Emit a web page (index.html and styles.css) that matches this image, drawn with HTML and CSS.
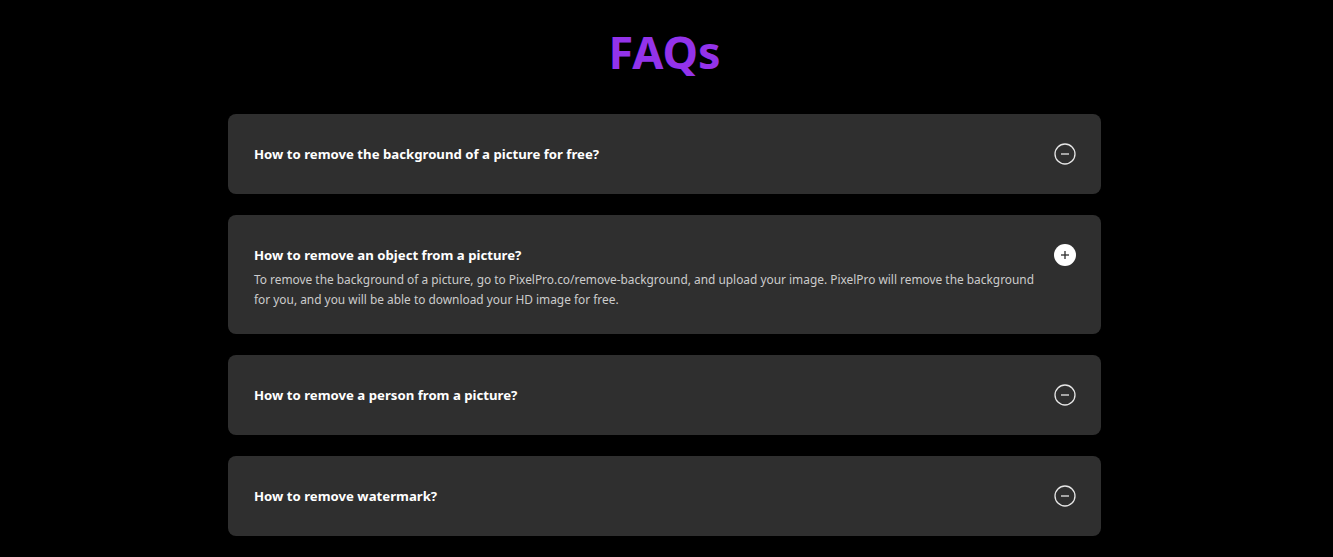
FILE: index.html
```html
<!DOCTYPE html>
<html lang="en">
<head>
<meta charset="utf-8">
<title>FAQs</title>
<link rel="stylesheet" href="styles.css">
</head>
<body>
<main class="faq">
  <h1 class="faq-title">FAQs</h1>
  <div class="faq-list">
    <div class="faq-item">
      <div class="faq-text">
        <h2 class="faq-q">How to remove the background of a picture for free?</h2>
      </div>
      <span class="faq-icon">
        <svg width="22" height="22" viewBox="0 0 22 22"><circle cx="11" cy="11" r="10" fill="none" stroke="#e6e6e6" stroke-width="1.3"/><line x1="7" y1="11" x2="15" y2="11" stroke="#e6e6e6" stroke-width="1.3"/></svg>
      </span>
    </div>
    <div class="faq-item open">
      <div class="faq-text">
        <h2 class="faq-q">How to remove an object from a picture?</h2>
        <p class="faq-a">To remove the background of a picture, go to PixelPro.co/remove-background, and upload your image. PixelPro will remove the background for you, and you will be able to download your HD image for free.</p>
      </div>
      <span class="faq-icon">
        <svg width="22" height="22" viewBox="0 0 22 22"><circle cx="11" cy="11" r="11" fill="#ffffff"/><line x1="7" y1="11" x2="15" y2="11" stroke="#2f2f2f" stroke-width="1.3"/><line x1="11" y1="7" x2="11" y2="15" stroke="#2f2f2f" stroke-width="1.3"/></svg>
      </span>
    </div>
    <div class="faq-item">
      <div class="faq-text">
        <h2 class="faq-q">How to remove a person from a picture?</h2>
      </div>
      <span class="faq-icon">
        <svg width="22" height="22" viewBox="0 0 22 22"><circle cx="11" cy="11" r="10" fill="none" stroke="#e6e6e6" stroke-width="1.3"/><line x1="7" y1="11" x2="15" y2="11" stroke="#e6e6e6" stroke-width="1.3"/></svg>
      </span>
    </div>
    <div class="faq-item">
      <div class="faq-text">
        <h2 class="faq-q">How to remove watermark?</h2>
      </div>
      <span class="faq-icon">
        <svg width="22" height="22" viewBox="0 0 22 22"><circle cx="11" cy="11" r="10" fill="none" stroke="#e6e6e6" stroke-width="1.3"/><line x1="7" y1="11" x2="15" y2="11" stroke="#e6e6e6" stroke-width="1.3"/></svg>
      </span>
    </div>
  </div>
</main>
</body>
</html>
```

FILE: styles.css
```css
html, body {
  margin: 0;
  padding: 0;
  background: #000000;
}

body {
  font-family: "Noto Sans", "Open Sans", sans-serif;
  color: #ffffff;
  padding-right: 4px;
}

.faq {
  width: 873px;
  margin: 0 auto;
  display: flex;
  flex-direction: column;
}

.faq-title {
  margin: 26px 0 0 0;
  height: 88px;
  text-align: center;
  font-size: 45px;
  line-height: 52px;
  font-weight: 700;
  color: #9333ea;
}

.faq-list {
  display: flex;
  flex-direction: column;
  gap: 21px;
}

.faq-item {
  background: #2f2f2f;
  border-radius: 8px;
  padding: 31px 25px 30px 26px;
  display: flex;
  align-items: center;
  gap: 10px;
}

.faq-item.open {
  align-items: flex-start;
  padding-bottom: 25px;
}

.faq-text {
  flex: 1;
}

.faq-q {
  margin: 0;
  font-size: 13.2px;
  line-height: 19px;
  font-weight: 700;
  color: #ffffff;
}

.faq-a {
  margin: 4px 0 0 0;
  max-width: 790px;
  font-size: 11.9px;
  line-height: 20px;
  color: #cccccc;
}

.faq-icon {
  display: flex;
  width: 22px;
  height: 22px;
  margin: -2px 0 -1px 0;
  flex: none;
}
```
